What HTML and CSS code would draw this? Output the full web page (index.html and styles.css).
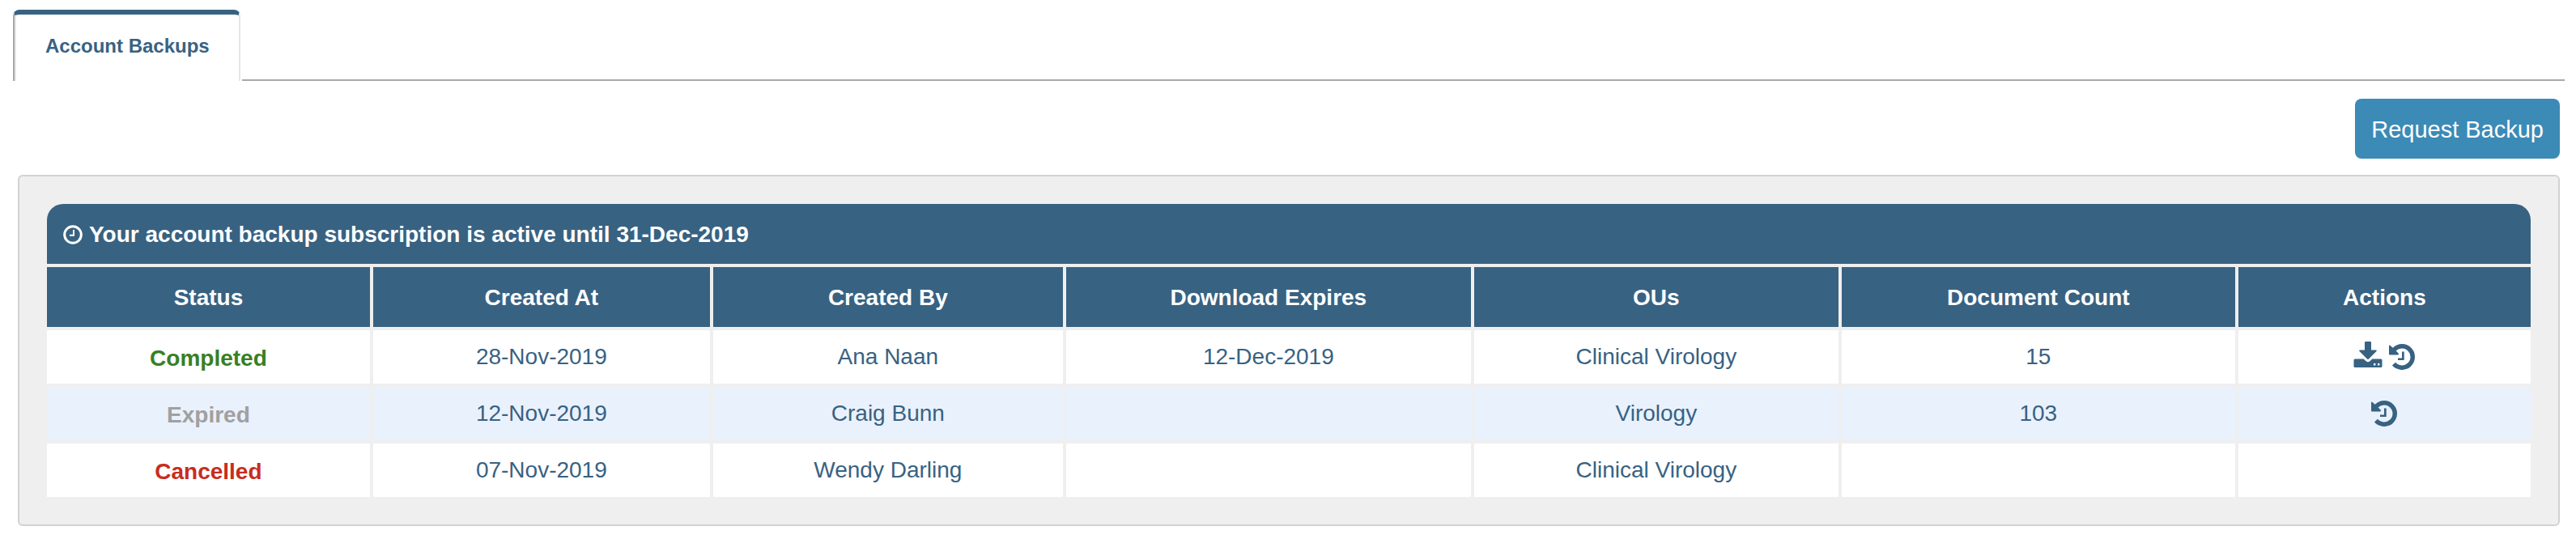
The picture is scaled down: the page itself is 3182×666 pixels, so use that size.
FILE: index.html
```html
<!DOCTYPE html>
<html lang="en">
<head>
    <meta charset="UTF-8">
    <meta name="viewport" content="width=device-width, initial-scale=1.0">
    <title>Account Backups</title>
    <link rel="stylesheet" href="styles.css">
</head>
<body>
    <!-- Shared icons -->
    <svg class="icon-defs" aria-hidden="true">
        <symbol id="icon-history" viewBox="0 0 32 32">
            <path d="M4.700 4.700A16 16 0 1 1 3.900 26.500L8 22.800A10.500 10.500 0 1 0 8.600 8.500L11.600 11.500Q12.600 13.500 11 13.500H1Q0 13.500 0 12.500V2.500Q0.400 1 1.600 2Z"/>
            <path d="M16 9.500H18.700V20H11V17.500H16Z"/>
        </symbol>
        <symbol id="icon-download" viewBox="0 0 36 32">
            <path d="M15 0H21Q22 0 22 1V10.500H28Q29.500 10.800 28.500 12L19 21.500Q18 22.500 17 21.500L7.500 12Q6.500 10.800 8 10.500H14V1Q14 0 15 0Z"/>
            <path fill-rule="evenodd" d="M2 21.500H12.500L16 24.500Q18 25.800 20 24.500L23.500 21.500H34Q35.500 21.500 35.500 23V30.500Q35.500 32 34 32H2Q0.500 32 0.500 30.500V23Q0.500 21.500 2 21.500ZM25 27V29.400H27.400V27ZM30 27V29.400H32.400V27Z"/>
        </symbol>
    </svg>

    <nav class="tabs">
        <a class="tab active" href="#backups">Account Backups</a>
    </nav>

    <main class="content" id="backups">
        <div class="toolbar">
            <button type="button" class="btn-request">Request Backup</button>
        </div>

        <section class="panel">
            <h2 class="subscription">
                <svg class="clock" viewBox="0 0 24 24" aria-hidden="true">
                    <circle cx="12" cy="12" r="10.300"/>
                    <path d="M13 6V12.800H8"/>
                </svg>
                Your account backup subscription is active until 31-Dec-2019
            </h2>
            <table class="backups">
                <colgroup>
                    <col class="col-status">
                    <col class="col-created-at">
                    <col class="col-created-by">
                    <col class="col-expires">
                    <col class="col-ous">
                    <col class="col-count">
                    <col class="col-actions">
                </colgroup>
                <thead>
                    <tr>
                        <th>Status</th>
                        <th>Created At</th>
                        <th>Created By</th>
                        <th>Download Expires</th>
                        <th>OUs</th>
                        <th>Document Count</th>
                        <th>Actions</th>
                    </tr>
                </thead>
                <tbody>
                    <tr>
                        <td class="status completed">Completed</td>
                        <td>28-Nov-2019</td>
                        <td>Ana Naan</td>
                        <td>12-Dec-2019</td>
                        <td>Clinical Virology</td>
                        <td>15</td>
                        <td>
                            <div class="actions">
                                <button type="button" class="action download" aria-label="Download"><svg class="icon-download"><use href="#icon-download"/></svg></button>
                                <button type="button" class="action" aria-label="History"><svg class="icon-history"><use href="#icon-history"/></svg></button>
                            </div>
                        </td>
                    </tr>
                    <tr>
                        <td class="status expired">Expired</td>
                        <td>12-Nov-2019</td>
                        <td>Craig Bunn</td>
                        <td></td>
                        <td>Virology</td>
                        <td>103</td>
                        <td>
                            <div class="actions">
                                <button type="button" class="action" aria-label="History"><svg class="icon-history"><use href="#icon-history"/></svg></button>
                            </div>
                        </td>
                    </tr>
                    <tr>
                        <td class="status cancelled">Cancelled</td>
                        <td>07-Nov-2019</td>
                        <td>Wendy Darling</td>
                        <td></td>
                        <td>Clinical Virology</td>
                        <td></td>
                        <td></td>
                    </tr>
                </tbody>
            </table>
        </section>
    </main>
</body>
</html>
```

FILE: styles.css
```css
* {
    box-sizing: border-box;
}
body {
    margin: 0;
    padding: 12px 14px 16px 16px;
    background-color: #fff;
    color: #386282;
    font-family: "Liberation Sans", Arial, sans-serif;
    font-size: 28px;
    line-height: 32px;
}
.icon-defs {
    display: none;
}

/* Tabs */
.tabs {
    display: flex;
}
.tabs::after {
    content: "";
    flex: 1;
    margin-left: 2px;
    border-bottom: 2px solid #a9a9a9;
}
.tab {
    padding: 24px 36px 28px 38px;
    border-top: 6px solid #386282;
    border-left: 2px solid #a9a9a9;
    border-right: 2px solid #e6e6e6;
    border-radius: 8px 8px 0 0;
    box-shadow: inset 2px 0 #e6e6e6;
    color: #386282;
    font-size: 24px;
    font-weight: bold;
    line-height: 30px;
    text-decoration: none;
}

/* Content */
.content {
    padding: 22px 6px 0;
}
.toolbar {
    display: flex;
    justify-content: flex-end;
    margin-bottom: 20px;
}
.btn-request {
    padding: 21px 20px 19px;
    border: none;
    border-radius: 8px;
    background-color: #3c8ab6;
    color: #fff;
    font-family: inherit;
    font-size: 29px;
    line-height: 34px;
    cursor: pointer;
}
.panel {
    padding: 34px;
    border: 2px solid #d2d2d2;
    border-radius: 6px;
    background-color: #efefef;
}
.subscription {
    display: flex;
    align-items: center;
    gap: 8px;
    margin: 0 0 4px;
    padding: 22px 20px 20px;
    border-radius: 20px 20px 0 0;
    background-color: #386282;
    color: #fff;
    font-size: 28px;
    line-height: 32px;
}
.clock {
    width: 24px;
    height: 24px;
    fill: none;
    stroke: #fff;
    stroke-width: 3;
}
.clock path {
    stroke-width: 2;
}

/* Backups table */
.backups {
    width: 100%;
    border-collapse: separate;
    border-spacing: 0;
    table-layout: fixed;
}
.backups th,
.backups td {
    border-left: 4px solid #efefef;
    text-align: center;
}
.backups th:first-child,
.backups td:first-child {
    border-left: none;
}
.backups th {
    padding: 22px 8px 20px;
    background-color: #386282;
    color: #fff;
}
.backups td {
    height: 70px;
    padding: 17px 8px;
    border-top: 4px solid #efefef;
    background-color: #fff;
}
.backups tbody tr:nth-child(even) td {
    background-color: #e9f1fd;
}
.col-status { width: 13%; }
.col-created-at { width: 13.690%; }
.col-created-by { width: 14.211%; }
.col-expires { width: 16.428%; }
.col-ous { width: 14.798%; }
.col-count { width: 15.971%; }
.backups .status {
    padding: 19px 8px 15px;
    font-weight: bold;
}
.completed { color: #388022; }
.expired { color: #a0a0a0; }
.cancelled { color: #c82c20; }

.actions {
    display: flex;
    align-items: center;
    justify-content: center;
    gap: 8px;
    height: 32px;
}
.action {
    padding: 0;
    border: none;
    background: none;
    cursor: pointer;
}
.download {
    padding-bottom: 6px;
}
.action svg {
    display: block;
    height: 32px;
    fill: #386282;
}
.icon-download {
    width: 36px;
}
.icon-history {
    width: 32px;
}
```
